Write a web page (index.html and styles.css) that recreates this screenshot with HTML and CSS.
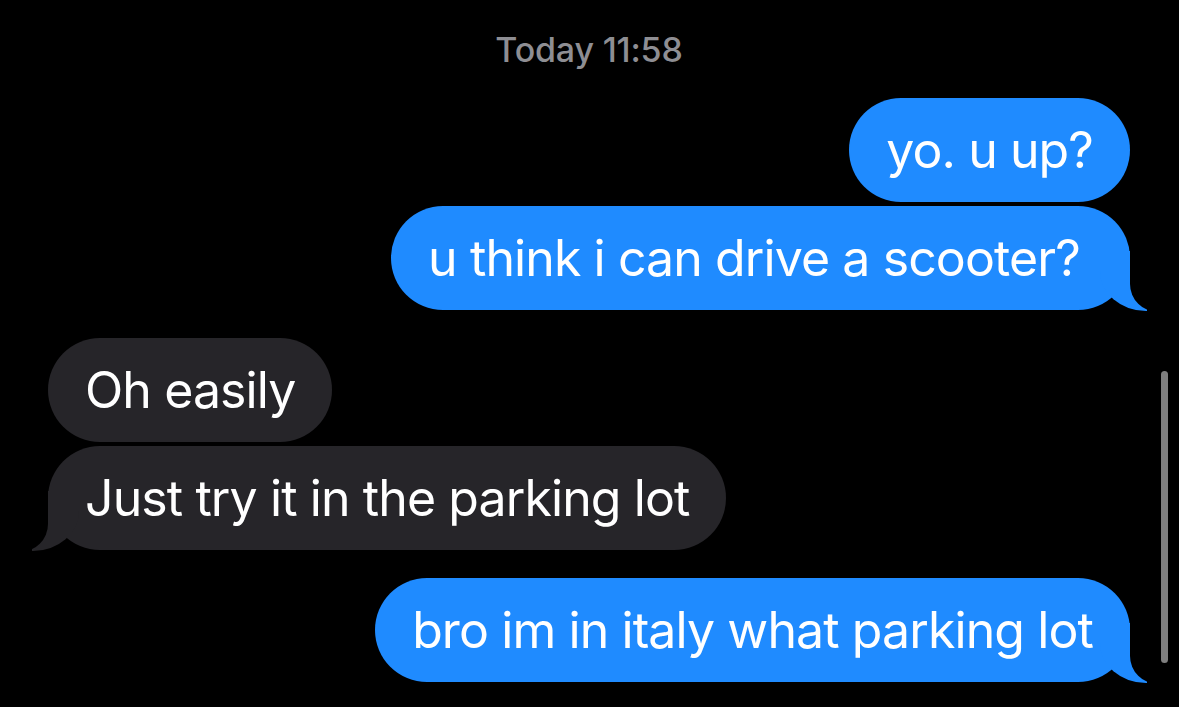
FILE: index.html
```html
<!DOCTYPE html>
<html lang="en">
<head>
<meta charset="utf-8">
<title>Messages</title>
<link rel="stylesheet" href="styles.css">
</head>
<body>
<main class="thread">
  <div class="stamp"><span class="stamp-day">Today</span> 11:58</div>
  <div class="group sent">
    <div class="bubble">yo. u up?</div>
    <div class="bubble tail">u think i can drive a scooter?&nbsp;</div>
  </div>
  <div class="group recv">
    <div class="bubble">Oh easily</div>
    <div class="bubble tail">Just try it in the parking lot</div>
  </div>
  <div class="group sent">
    <div class="bubble tail">bro im in italy what parking lot</div>
  </div>
  <div class="scrollbar"></div>
</main>
</body>
</html>
```
FILE: styles.css
```css
html, body {
  margin: 0;
  padding: 0;
  background: #000;
}
body {
  width: 1179px;
  height: 707px;
  overflow: hidden;
  font-family: Inter, "Noto Sans", sans-serif;
  color: #fff;
}
.thread {
  position: relative;
  height: 707px;
  display: flex;
  flex-direction: column;
  padding: 30px 49px 0 48px;
  box-sizing: border-box;
}
.stamp {
  text-align: center;
  font-size: 34px;
  line-height: 40px;
  font-weight: 500;
  color: #8e8e93;
  letter-spacing: -0.2px;
  margin-bottom: 28px;
}
.group {
  display: flex;
  flex-direction: column;
  gap: 4px;
  margin-bottom: 28px;
}
.group.sent { align-items: flex-end; }
.group.recv { align-items: flex-start; }
.bubble {
  position: relative;
  height: 104px;
  box-sizing: border-box;
  padding: 0 37px;
  border-radius: 52px;
  font-size: 50px;
  line-height: 104px;
  letter-spacing: -0.9px;
  white-space: nowrap;
}
.sent .bubble { background: #1f8bff; }
.recv .bubble { background: #262529; }

.bubble.tail::before,
.bubble.tail::after {
  content: "";
  position: absolute;
  bottom: 0;
}
.sent .bubble.tail::before {
  right: -17px;
  width: 47px;
  height: 60px;
  background: #1f8bff;
  border-bottom-left-radius: 46px 40px;
  bottom: -1px;
}
.sent .bubble.tail::after {
  right: -40px;
  width: 40px;
  height: 62px;
  background: #000;
  border-bottom-left-radius: 28px;
  bottom: -2px;
}
.recv .bubble.tail::before {
  left: -16px;
  width: 47px;
  height: 60px;
  background: #262529;
  border-bottom-right-radius: 46px 40px;
  bottom: -1px;
}
.recv .bubble.tail::after {
  left: -40px;
  width: 40px;
  height: 62px;
  background: #000;
  border-bottom-right-radius: 28px;
  bottom: -2px;
}
.scrollbar {
  position: absolute;
  right: 11px;
  top: 371px;
  width: 7px;
  height: 292px;
  border-radius: 4px;
  background: #7f7f7f;
}
```
